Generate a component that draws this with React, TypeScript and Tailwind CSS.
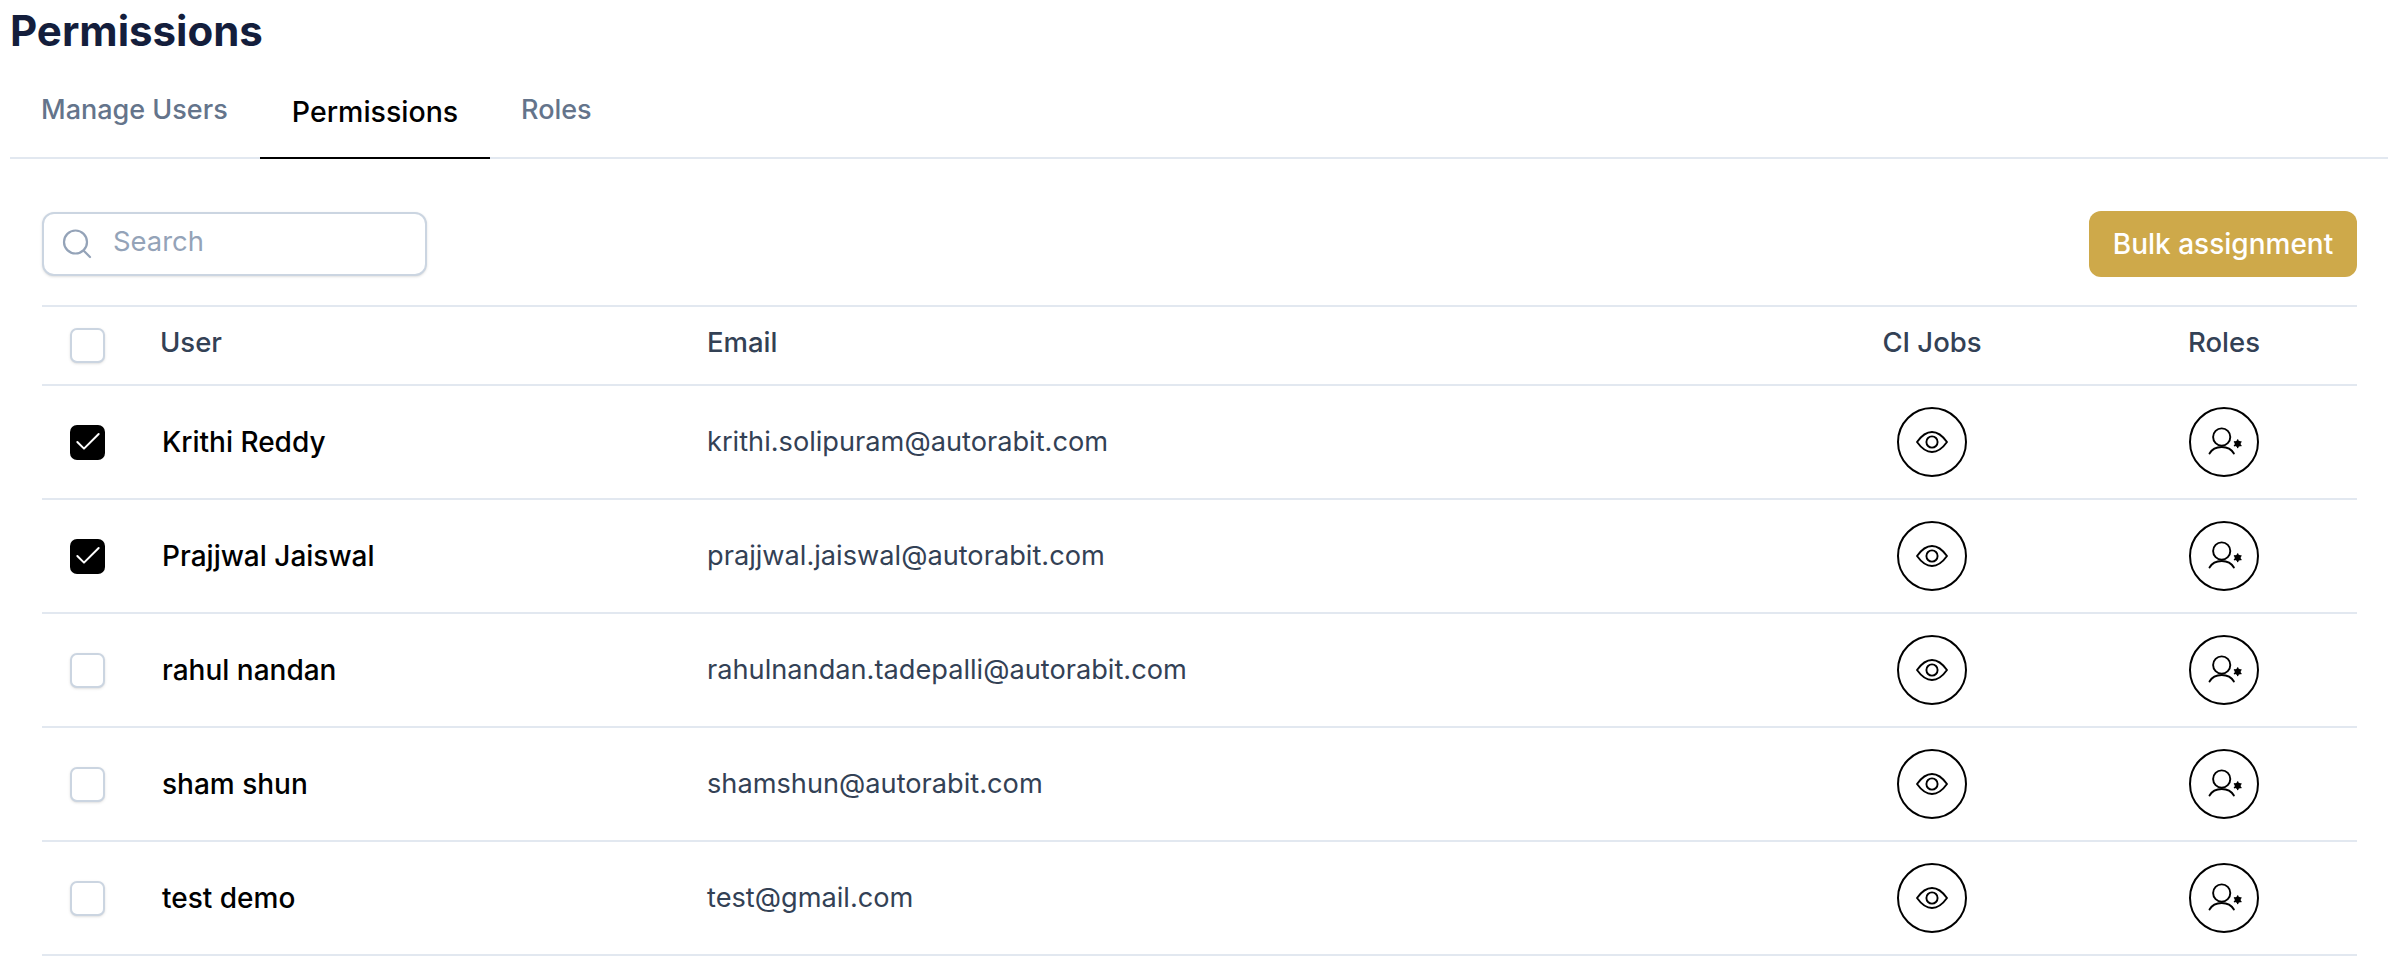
import React from "react";
import { Check } from "lucide-react";

const users = [
  { name: "Krithi Reddy", email: "krithi.solipuram@autorabit.com", checked: true },
  { name: "Prajjwal Jaiswal", email: "prajjwal.jaiswal@autorabit.com", checked: true },
  { name: "rahul nandan", email: "rahulnandan.tadepalli@autorabit.com", checked: false },
  { name: "sham shun", email: "shamshun@autorabit.com", checked: false },
  { name: "test demo", email: "test@gmail.com", checked: false },
];

function Checkbox({ checked }: { checked?: boolean }) {
  if (checked) {
    return (
      <div className="w-[35px] h-[35px] rounded-[7px] bg-black flex items-center justify-center">
        <Check className="w-[32px] h-[32px] text-white" strokeWidth={1.5} />
      </div>
    );
  }
  return <div className="w-[35px] h-[35px] rounded-[7px] border-2 border-[#cbd5e1] bg-white shadow-sm" />;
}

function SearchIcon() {
  return (
    <svg width="30" height="30" viewBox="0 0 30 30" fill="none" stroke="#94a3b8" strokeWidth="2.2" strokeLinecap="round">
      <circle cx="13.5" cy="13" r="11.5" />
      <path d="M22 22l6 6" />
    </svg>
  );
}

function EyeIcon() {
  return (
    <svg width="34" height="24" viewBox="0 0 34 24" fill="none" stroke="black" strokeWidth="1.9">
      <path d="M2 12C7 5 12 2 17 2s10 3 15 10c-5 7-10 10-15 10S7 19 2 12Z" strokeLinejoin="round" />
      <circle cx="17" cy="12" r="5.6" />
    </svg>
  );
}

function RoleIcon() {
  return (
    <svg width="40" height="34" viewBox="0 0 40 34" fill="none" stroke="black" strokeWidth="1.9" strokeLinecap="round">
      <circle cx="17.7" cy="12" r="8.6" />
      <path d="M5.5 28.5C8 24 12 22 17.7 22s9.700 2 12.200 6.500" />
      <circle cx="33.700" cy="18.700" r="2" strokeWidth="2.200" />
      <path d="M33.700 15v7.400M30.500 16.800l6.400 3.800M36.900 16.800l-6.400 3.800" strokeWidth="1.500" />
    </svg>
  );
}

export default function App() {
  return (
    <div className="w-[2388px] h-[956px] bg-white overflow-hidden pl-[10px] font-['Inter',sans-serif]">
      <h1 className="h-[64px] text-[42px] leading-[62px] font-bold text-[#141e3c]">Permissions</h1>

      <div className="flex h-[95px] border-b-2 border-[#e2e8f0] pl-[10px] text-[27px]">
        <div className="w-[240px] pl-[21px] pt-[22px] leading-[48px] font-medium text-[#64748b]">Manage Users</div>
        <div className="w-[230px] -mb-[2px] border-b-2 border-black text-center pt-[24px] leading-[48px] font-medium text-black text-[28.500px]">Permissions</div>
        <div className="pl-[31px] pt-[22px] leading-[48px] font-medium text-[#64748b]">Roles</div>
      </div>

      <div className="pl-[32px] pr-[31px]">
        <div className="flex items-center justify-between h-[66px] mt-[52px] mb-[28px]">
          <div className="flex items-center w-[385px] h-[64px] rounded-[12px] border-2 border-[#cbd5e1] bg-white shadow-sm pl-[18px]">
            <SearchIcon />
            <span className="ml-[21px] text-[27.400px] text-[#94a3b8] pb-[4px]">Search</span>
          </div>
          <button className="w-[268px] h-[66px] rounded-[12px] bg-[#cea94a] text-white text-[28px] font-medium">Bulk assignment</button>
        </div>

        <div className="flex items-center h-[81px] border-t-2 border-b-2 border-[#e2e8f0] text-[27.500px] font-medium text-[#334155]">
          <div className="w-[118px] pl-[28px]"><Checkbox /></div>
          <div className="w-[547px] pb-[5px]">User</div>
          <div className="flex-1 pb-[5px]">Email</div>
          <div className="w-[100px] text-center whitespace-nowrap pb-[5px]">CI Jobs</div>
          <div className="w-[192px]" />
          <div className="w-[100px] text-center pb-[5px]">Roles</div>
          <div className="w-[83px]" />
        </div>

        {users.map((user) => (
          <div key={user.email} className="flex items-center h-[114px] border-b-2 border-[#e2e8f0]">
            <div className="w-[120px] pl-[28px]"><Checkbox checked={user.checked} /></div>
            <div className="w-[545px] text-[28px] font-medium text-black">{user.name}</div>
            <div className="flex-1 text-[27.200px] text-[#334155]">{user.email}</div>
            <div className="w-[100px] flex justify-center">
              <div className="w-[70px] h-[70px] rounded-full border-2 border-black flex items-center justify-center">
                <EyeIcon />
              </div>
            </div>
            <div className="w-[192px]" />
            <div className="w-[100px] flex justify-center">
              <div className="w-[70px] h-[70px] rounded-full border-2 border-black flex items-center justify-center">
                <RoleIcon />
              </div>
            </div>
            <div className="w-[83px]" />
          </div>
        ))}
      </div>
    </div>
  );
}
